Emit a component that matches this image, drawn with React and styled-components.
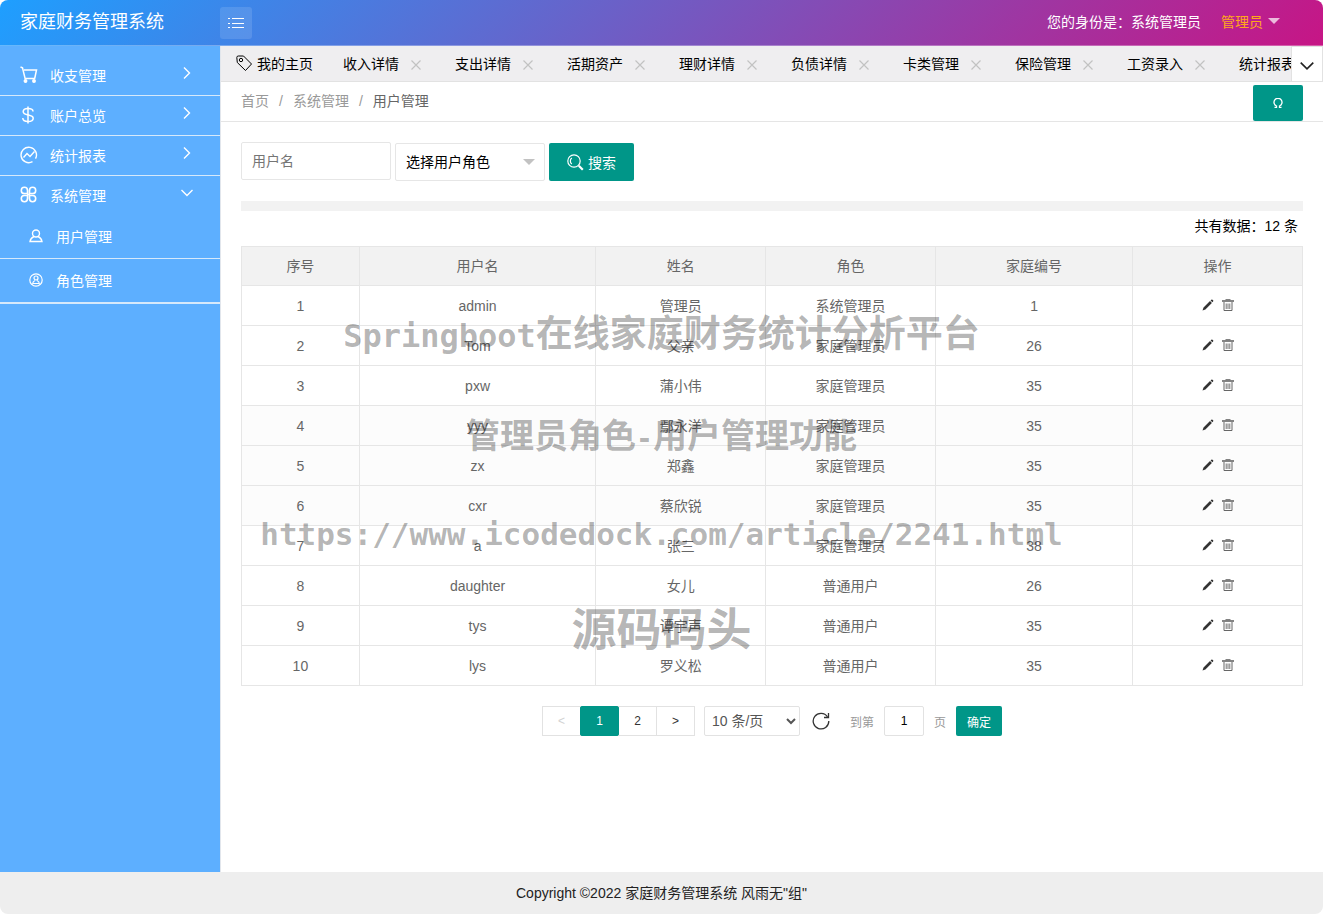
import React, { useState } from 'react';
import styled, { createGlobalStyle } from 'styled-components';

const GlobalStyle = createGlobalStyle`
  *, *::before, *::after {
    box-sizing: border-box;
  }
  body {
    margin: 0;
    background: #fff;
  }
  body, button, input, select, table {
    font-family: "Liberation Sans", "Noto Sans CJK SC", sans-serif;
    font-size: 14px;
  }
  a {
    text-decoration: none;
    color: inherit;
  }
  ul {
    margin: 0;
    padding: 0;
    list-style: none;
  }
`;

const Page = styled.div`
  position: relative;
  display: flex;
  flex-direction: column;
  min-height: 100vh;
  border-radius: 8px;
  overflow: hidden;
  background: #fff;
`;

const Header = styled.header`
  display: flex;
  align-items: center;
  height: 46px;
  padding-right: 43px;
  border-bottom: 1px solid rgba(255, 255, 255, 0.3);
  background: linear-gradient(135deg, #1e9fff, #c71585);
  background-origin: border-box;
  color: #fff;
`;

const Brand = styled.h1`
  flex: 0 0 220px;
  margin: 0;
  padding: 0 0 2px 20px;
  font-size: 18px;
  font-weight: 400;
  line-height: 40px;
`;

const ToggleButton = styled.button`
  display: flex;
  align-items: center;
  justify-content: center;
  width: 32px;
  height: 32px;
  padding: 0;
  border: 0;
  border-radius: 3px;
  background: rgba(255, 255, 255, 0.12);
  color: #fff;
`;

const Identity = styled.span`
  margin-left: auto;
  padding-bottom: 4px;
`;

const UserMenu = styled.button`
  display: flex;
  align-items: center;
  gap: 5px;
  margin-left: 20px;
  padding: 0 0 4px;
  border: 0;
  background: none;
  color: #ffa81a;
`;

const Caret = styled.span`
  border: 6px solid transparent;
  border-top-color: ${(props) => props.$color};
  border-bottom: 0;
`;

const Body = styled.div`
  display: flex;
  flex: 1;
`;

const Sidebar = styled.nav`
  flex: 0 0 221px;
  padding-top: 10px;
  border-right: 1px solid #e2e6ec;
  background: #5dafff;
  color: #fff;
`;

const MenuItem = styled.a`
  display: grid;
  grid-template-columns: 30px 1fr 14px;
  align-items: center;
  height: ${(props) => (props.$open ? '39px' : '40px')};
  padding: 0 26px 2px 20px;
  border-bottom: ${(props) => (props.$open ? '0' : '1px solid #d6e9fb')};
`;

const MenuArrow = styled.span`
  display: flex;
  padding-bottom: 4px;
`;

const SubMenu = styled.ul`
  border-bottom: 1px solid #d6e9fb;
`;

const SubItem = styled.a`
  display: flex;
  align-items: center;
  gap: 12px;
  height: 44px;
  padding: 0 0 2px 28px;
  border-bottom: 1px solid #d6e9fb;
`;

const Main = styled.main`
  flex: 1;
  min-width: 0;
`;

const TabBar = styled.div`
  display: flex;
  height: 36px;
  border-bottom: 1px solid #e2e2e2;
  background: #efeef0;
`;

const TabList = styled.div`
  display: flex;
  flex: 1;
  min-width: 0;
  overflow: hidden;
`;

const Tab = styled.div`
  display: flex;
  flex: none;
  align-items: center;
  gap: ${(props) => (props.$home ? '5px' : '10px')};
  padding: 0 ${(props) => (props.$home ? '15px' : '17px')} 2px 15px;
  color: #000;
`;

const CloseButton = styled.button`
  display: flex;
  align-items: center;
  justify-content: center;
  width: 14px;
  height: 18px;
  padding: 4px 0 0;
  border: 0;
  background: none;
  color: #c2c2c2;
`;

const TabMore = styled.button`
  display: flex;
  align-items: center;
  justify-content: center;
  flex: 0 0 32px;
  padding: 4px 0 0;
  border: 1px solid #e2e2e2;
  border-width: 1px 1px 0;
  background: #fff;
  color: #222;
`;

const CrumbBar = styled.div`
  display: flex;
  align-items: flex-end;
  justify-content: space-between;
  height: 40px;
  padding: 0 20px;
  border-bottom: 1px solid #e5e5e5;
`;

const Crumbs = styled.nav`
  display: flex;
  line-height: 40px;
  color: #999;
`;

const Slash = styled.span`
  padding: 0 10px;
`;

const CurrentCrumb = styled.span`
  color: #666;
`;

const GreenButton = styled.button`
  display: inline-flex;
  align-items: center;
  justify-content: center;
  gap: 4px;
  height: ${(props) => props.$height};
  padding: 0 ${(props) => props.$pad};
  border: 0;
  border-radius: 2px;
  background: #009688;
  color: #fff;
  font-size: ${(props) => (props.$small ? '12px' : '14px')};
`;

const Content = styled.div`
  padding: 20px;
`;

const FilterForm = styled.form`
  display: flex;
  align-items: flex-end;
  gap: 4px;
  height: 39px;
`;

const NameInput = styled.input`
  align-self: flex-start;
  width: 150px;
  height: 38px;
  padding: 0 10px;
  border: 1px solid #e6e6e6;
  border-radius: 2px;
  &::placeholder {
    color: #757575;
  }
`;

const RoleBox = styled.div`
  position: relative;
  width: 150px;
  height: 38px;
  ${Caret} {
    position: absolute;
    right: 10px;
    top: 16px;
    pointer-events: none;
  }
`;

const RoleSelect = styled.select`
  appearance: none;
  width: 100%;
  height: 100%;
  padding: 0 10px;
  border: 1px solid #e6e6e6;
  border-radius: 2px;
  background: #fff;
  color: #000;
`;

const Divider = styled.hr`
  height: 10px;
  margin: 20px 0 0;
  border: 0;
  background: #f2f2f2;
`;

const Total = styled.p`
  margin: 0;
  padding: 0 5px 4px 0;
  text-align: right;
  line-height: 31px;
`;

const Table = styled.table`
  width: 100%;
  table-layout: fixed;
  border-collapse: collapse;
  color: #666;
  th,
  td {
    height: 40px;
    padding: 0;
    border: 1px solid #e6e6e6;
    font-weight: 400;
    line-height: 20px;
    text-align: center;
  }
  th {
    height: 39px;
    background: #f2f2f2;
  }
`;

const Row = styled.tr`
  background: ${(props) => (props.$tinted ? '#fcfcfc' : '#fff')};
`;

const RowActions = styled.div`
  display: flex;
  align-items: center;
  justify-content: center;
  gap: 8px;
  padding-bottom: 2px;
`;

const IconButton = styled.button`
  display: flex;
  padding: 0;
  border: 0;
  background: none;
  color: ${(props) => props.$color || '#333'};
`;

const Pager = styled.div`
  display: flex;
  align-items: center;
  justify-content: center;
  height: 30px;
  margin-top: 20px;
  font-size: 12px;
  color: #999;
`;

const PageButton = styled.button`
  position: relative;
  z-index: ${(props) => (props.$active ? 1 : 0)};
  width: 39px;
  height: 30px;
  margin-right: -1px;
  padding: 0;
  border: 1px solid ${(props) => (props.$active ? '#009688' : '#e2e2e2')};
  border-radius: ${(props) => (props.$active ? '2px' : '0')};
  background: ${(props) => (props.$active ? '#009688' : '#fff')};
  color: ${(props) => (props.$active ? '#fff' : '#333')};
  font-size: 12px;
  &:disabled {
    color: #d2d2d2;
  }
`;

const PageSize = styled.select`
  width: 96px;
  height: 30px;
  margin: 0 12px 0 10px;
  padding: 0 0 0 3px;
  border: 1px solid #e2e2e2;
  border-radius: 2px;
  background: #fff;
  color: #555;
`;

const JumpLabel = styled.label`
  display: flex;
  align-items: center;
  gap: 10px;
  margin: 0 10px 0 20px;
`;

const JumpInput = styled.input`
  width: 40px;
  height: 30px;
  padding: 0;
  border: 1px solid #e2e2e2;
  border-radius: 2px;
  text-align: center;
  font-size: 12px;
`;

const Footer = styled.footer`
  height: 42px;
  background: #eee;
  line-height: 42px;
  text-align: center;
  color: #222;
`;

const Watermark = styled.div`
  position: absolute;
  top: 306px;
  left: 0;
  right: 0;
  pointer-events: none;
  color: rgba(0, 0, 0, 0.3);
  font-family: "DejaVu Sans Mono", "Noto Sans CJK SC", monospace;
  font-weight: 700;
  text-align: center;
`;

const WatermarkLine = styled.div`
  height: ${(props) => props.$height};
  line-height: 50px;
  font-family: ${(props) => (props.$latin ? 'inherit' : '"Noto Sans CJK SC", sans-serif')};
  font-size: ${(props) => props.$size};
`;

const WatermarkLatin = styled.span`
  font-family: "DejaVu Sans Mono", monospace;
  font-size: ${(props) => props.$size};
  line-height: 1;
`;

const Svg = ({ size = 16, width = 1, view = 16, children }) => (
  <svg
    width={size}
    height={size}
    viewBox={`0 0 ${view} ${view}`}
    fill="none"
    stroke="currentColor"
    strokeWidth={width}
    aria-hidden="true"
  >
    {children}
  </svg>
);

const ListIcon = () => (
  <Svg size={18} view={18}>
    <path d="M5 4.5h12M5 9.5h12M5 13.5h12" />
    <path d="M1 4.5h2M1 9.5h2M1 13.5h2" />
  </Svg>
);

const CartIcon = () => (
  <Svg size={18} view={18} width={1.5}>
    <path d="M0.5 1l2 .8 2.600 10.700h10" />
    <path d="M4 4h12.500l-1.800 8.500" />
    <circle cx="5.500" cy="15" r="1.200" fill="currentColor" />
    <circle cx="14" cy="15" r="1.200" fill="currentColor" />
  </Svg>
);

const DollarIcon = () => (
  <Svg view={18} size={18} width={1.5}>
    <path d="M8 0.5v17" />
    <path d="M13 5.500c0-2-2-3-5-3s-4.800 1-4.800 3.200c0 4.600 10 2 10 6.500 0 2.300-2.200 3.300-5.200 3.300s-5.200-1.200-5.200-3.500" />
  </Svg>
);

const ChartIcon = () => (
  <Svg view={18} size={18} width={1.4}>
    <path d="M12.500 15.700a7.700 7.700 0 1 1 3-3" />
    <path d="M3.500 11.500L7 7.500l3 3 4.500-5" />
  </Svg>
);

const CloverIcon = () => (
  <Svg view={18} size={18} width={1.6}>
    <path d="M7.500 7.500H4.400A3.100 3.100 0 1 1 7.500 4.400zM9.500 7.500h3.100A3.100 3.100 0 1 0 9.500 4.400zM7.500 9.500H4.400a3.100 3.100 0 1 0 3.100 3.100zM9.500 9.500h3.100a3.100 3.100 0 1 1-3.100 3.100z" />
    <path d="M7 8.500h3" />
  </Svg>
);

const PersonIcon = () => (
  <Svg width={1.4}>
    <circle cx="8" cy="5.500" r="3.500" />
    <path d="M6 8.500C3.500 9.500 2.400 11 2 13.500h12c-.4-2.500-1.500-4-4-5" />
  </Svg>
);

const RoleIcon = () => (
  <Svg width={1.2}>
    <circle cx="8" cy="8" r="6.200" />
    <circle cx="8" cy="6" r="2" />
    <path d="M4.500 12.500c.2-2.500 1.200-3.500 2.300-4M11.500 12.500c-.2-2.500-1.200-3.500-2.300-4M5 11.500h6" />
  </Svg>
);

const ChevronIcon = ({ down, size = 14 }) => (
  <Svg size={size} view={14} width={1.4}>
    {down ? <path d="M1.500 4L7 9.500 12.500 4" /> : <path d="M4 1.500L9.500 7 4 12.500" />}
  </Svg>
);

const TagIcon = () => (
  <Svg>
    <path d="M0.800 2.500Q0.800 1 2.300 1H7.500L15.500 9 9.500 15.500 1.300 7.500z" />
    <circle cx="5" cy="5" r="1.700" />
  </Svg>
);

const CrossIcon = () => (
  <Svg size={10} view={10} width={1.2}>
    <path d="M0.500 0.500l9 9M9.500 0.500l-9 9" />
  </Svg>
);

const ReloadGlyph = () => (
  <Svg size={10} view={10} width={1.3}>
    <path d="M1.500 9.300h2V8A4 4 0 1 1 6.500 8v1.300h2" />
  </Svg>
);

const SearchIcon = () => (
  <Svg size={17} view={17} width={1.2}>
    <circle cx="7" cy="7" r="6.200" />
    <path d="M4.800 4a3.800 3.800 0 0 0 0 6" />
    <path d="M11.800 11.800l4 4" strokeWidth="2.200" />
  </Svg>
);

const PencilIcon = () => (
  <svg width="12" height="12" viewBox="0 0 12 12" fill="currentColor" aria-hidden="true">
    <path d="M0.500 11.500l1-3L8 2l1.900 1.900-6.500 6.500zM8.600 1.400l.7-.7q.6-.5 1.200 0l.6.6q.5.600 0 1.200l-.7.7z" />
  </svg>
);

const TrashIcon = () => (
  <Svg size={12} view={12}>
    <path d="M0 2h12" strokeWidth="1.600" />
    <path d="M3.500 0.700h5M2 3v8.500h8V3" />
    <path d="M4.200 4.500v5.500M6 4.500v5.500M7.800 4.500v5.500" strokeWidth="0.900" />
  </Svg>
);

const RefreshIcon = () => (
  <Svg size={18} view={18} width={1.3}>
    <path d="M15.500 4.800A7.800 7.800 0 1 0 16.800 9" />
    <path d="M16.500 1v4.500H12" />
  </Svg>
);

const menus = [
  { label: '收支管理', icon: <CartIcon /> },
  { label: '账户总览', icon: <DollarIcon /> },
  { label: '统计报表', icon: <ChartIcon /> },
  { label: '系统管理', icon: <CloverIcon />, open: true },
];

const tabs = ['收入详情', '支出详情', '活期资产', '理财详情', '负债详情', '卡类管理', '保险管理', '工资录入', '统计报表'];

const columns = [
  { title: '序号', width: '11.1%' },
  { title: '用户名', width: '22.3%' },
  { title: '姓名', width: '16%' },
  { title: '角色', width: '16%' },
  { title: '家庭编号', width: '18.6%' },
  { title: '操作', width: '16%' },
];

const users = [
  ['admin', '管理员', '系统管理员', 1],
  ['Tom', '父亲', '家庭管理员', 26],
  ['pxw', '蒲小伟', '家庭管理员', 35],
  ['yyy', '鄢永洋', '家庭管理员', 35],
  ['zx', '郑鑫', '家庭管理员', 35],
  ['cxr', '蔡欣锐', '家庭管理员', 35],
  ['a', '张三', '家庭管理员', 38],
  ['daughter', '女儿', '普通用户', 26],
  ['tys', '谭宇声', '普通用户', 35],
  ['lys', '罗义松', '普通用户', 35],
];

const App = () => {
  const [page, setPage] = useState('1');

  return (
    <Page>
      <GlobalStyle />
      <Header>
        <Brand>家庭财务管理系统</Brand>
        <ToggleButton aria-label="菜单"><ListIcon /></ToggleButton>
        <Identity>您的身份是：系统管理员</Identity>
        <UserMenu>
          管理员
          <Caret $color="rgba(255, 255, 255, 0.7)" />
        </UserMenu>
      </Header>

      <Body>
        <Sidebar>
          {menus.map((item) => (
            <MenuItem key={item.label} href="#" $open={item.open}>
              {item.icon}
              <span>{item.label}</span>
              <MenuArrow><ChevronIcon down={item.open} /></MenuArrow>
            </MenuItem>
          ))}
          <SubMenu>
            <li><SubItem href="#"><PersonIcon />用户管理</SubItem></li>
            <li><SubItem href="#"><RoleIcon />角色管理</SubItem></li>
          </SubMenu>
        </Sidebar>

        <Main>
          <TabBar>
            <TabList>
              <Tab $home><TagIcon />我的主页</Tab>
              {tabs.map((tab) => (
                <Tab key={tab}>
                  {tab}
                  <CloseButton aria-label="关闭"><CrossIcon /></CloseButton>
                </Tab>
              ))}
            </TabList>
            <TabMore aria-label="更多"><ChevronIcon down size={16} /></TabMore>
          </TabBar>

          <CrumbBar>
            <Crumbs>
              <a href="#">首页</a>
              <Slash>/</Slash>
              <a href="#">系统管理</a>
              <Slash>/</Slash>
              <CurrentCrumb>用户管理</CurrentCrumb>
            </Crumbs>
            <GreenButton $height="36px" $pad="20px" aria-label="刷新"><ReloadGlyph /></GreenButton>
          </CrumbBar>

          <Content>
            <FilterForm onSubmit={(e) => e.preventDefault()}>
              <NameInput placeholder="用户名" aria-label="用户名" />
              <RoleBox>
                <RoleSelect aria-label="选择用户角色">
                  <option>选择用户角色</option>
                </RoleSelect>
                <Caret $color="#c2c2c2" />
              </RoleBox>
              <GreenButton $height="38px" $pad="18px"><SearchIcon />搜索</GreenButton>
            </FilterForm>
            <Divider />
            <Total>共有数据：12 条</Total>

            <Table>
              <colgroup>
                {columns.map((col) => <col key={col.title} width={col.width} />)}
              </colgroup>
              <thead>
                <tr>
                  {columns.map((col) => <th key={col.title}>{col.title}</th>)}
                </tr>
              </thead>
              <tbody>
                {users.map((user, i) => (
                  <Row key={user[0]} $tinted={i > 2 && i < 6}>
                    <td>{i + 1}</td>
                    {user.map((value, j) => <td key={j}>{value}</td>)}
                    <td>
                      <RowActions>
                        <IconButton aria-label="编辑"><PencilIcon /></IconButton>
                        <IconButton aria-label="删除" $color="#666"><TrashIcon /></IconButton>
                      </RowActions>
                    </td>
                  </Row>
                ))}
              </tbody>
            </Table>

            <Pager>
              <PageButton disabled>&lt;</PageButton>
              <PageButton $active>1</PageButton>
              <PageButton>2</PageButton>
              <PageButton>&gt;</PageButton>
              <PageSize aria-label="每页条数">
                <option>10 条/页</option>
              </PageSize>
              <IconButton aria-label="刷新表格"><RefreshIcon /></IconButton>
              <JumpLabel>
                到第
                <JumpInput value={page} onChange={(e) => setPage(e.target.value)} />
                页
              </JumpLabel>
              <GreenButton $height="30px" $pad="11px" $small>确定</GreenButton>
            </Pager>
          </Content>
        </Main>
      </Body>

      <Footer>Copyright ©2022 家庭财务管理系统 风雨无"组"</Footer>

      <Watermark aria-hidden="true">
        <WatermarkLine $size="37px" $height="103px">
          <WatermarkLatin $size="32px">Springboot</WatermarkLatin>在线家庭财务统计分析平台
        </WatermarkLine>
        <WatermarkLine $size="34px" $height="100px">
          管理员角色<WatermarkLatin $size="28px">-</WatermarkLatin>用户管理功能
        </WatermarkLine>
        <WatermarkLine $latin $size="31px" $height="93px">https://www.icodedock.com/article/2241.html</WatermarkLine>
        <WatermarkLine $size="45px" $height="50px">源码码头</WatermarkLine>
      </Watermark>
    </Page>
  );
};

export default App;
